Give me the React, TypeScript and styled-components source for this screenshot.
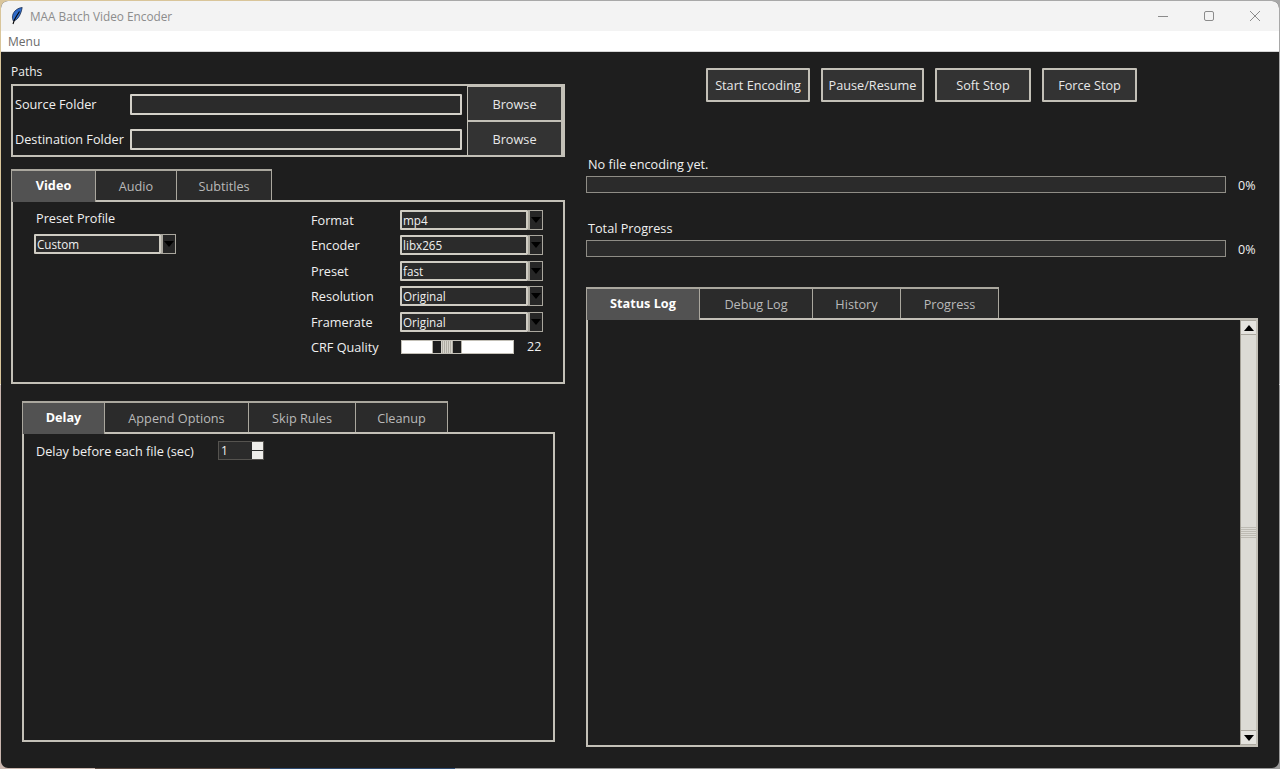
import React from 'react';
import styled, { createGlobalStyle } from 'styled-components';

const GlobalStyle = createGlobalStyle`
  html, body {
    margin: 0;
    padding: 0;
  }
  body {
    font-family: "Open Sans", "Noto Sans", "Liberation Sans", sans-serif;
    font-size: 12.7px;
  }
  * {
    box-sizing: border-box;
  }
`;

const videoOptions = [
  { label: 'Format', value: 'mp4' },
  { label: 'Encoder', value: 'libx265' },
  { label: 'Preset', value: 'fast' },
  { label: 'Resolution', value: 'Original' },
  { label: 'Framerate', value: 'Original' },
];

const actions = [
  { label: 'Start Encoding', width: 104 },
  { label: 'Pause/Resume', width: 103 },
  { label: 'Soft Stop', width: 96 },
  { label: 'Force Stop', width: 95 },
];

const Feather = () => (
  <svg width="12" height="18" viewBox="0 0 12 18">
    <path d="M11.200.5C7 .8 2.500 4 1.600 8.500 1.200 10.500 1.500 12.500 2.400 14 7 13 10 7.500 11.200.5z" fill="#2f6bc8" stroke="#10203f" strokeWidth=".7" />
    <path d="M8.500 4.500C6.500 7.500 4.500 10.500 3.400 13L2 17" stroke="#060606" strokeWidth="1.100" fill="none" />
  </svg>
);

const ArrowDown = () => (
  <svg width="10" height="6" viewBox="0 0 10 6">
    <path d="M0 0h10L5 6z" fill="#000" />
  </svg>
);

const App: React.FC = () => {
  return (
    <Desktop>
      <GlobalStyle />
      <Window>
        {/* title bar */}
        <TitleBar>
          <TitleLeft>
            <Feather />
            <TitleText>MAA Batch Video Encoder</TitleText>
          </TitleLeft>
          <WindowControls>
            <svg width="12" height="12" viewBox="0 0 12 12">
              <path d="M1 6.500h10" stroke="#8b8b8b" strokeWidth="1" />
            </svg>
            <svg width="12" height="12" viewBox="0 0 12 12">
              <rect x="1.500" y="1.500" width="9" height="9" rx="1.500" fill="none" stroke="#8b8b8b" strokeWidth="1" />
            </svg>
            <svg width="12" height="12" viewBox="0 0 12 12">
              <path d="M1 1l10 10M11 1L1 11" stroke="#8b8b8b" strokeWidth="1" />
            </svg>
          </WindowControls>
        </TitleBar>
        <MenuBar>Menu</MenuBar>

        <Content>
          <LeftColumn>
            <PathsLabel>Paths</PathsLabel>
            <PathsFrame>
              <PathRow>
                <PathLabel>Source Folder</PathLabel>
                <PathInput />
                <BrowseButton>Browse</BrowseButton>
              </PathRow>
              <PathRow>
                <PathLabel>Destination Folder</PathLabel>
                <PathInput />
                <BrowseButton>Browse</BrowseButton>
              </PathRow>
            </PathsFrame>

            <TabRow $top={12}>
              <Tab $active $width={85}>Video</Tab>
              <Tab $width={82}>Audio</Tab>
              <Tab $width={96}>Subtitles</Tab>
            </TabRow>
            <VideoPanel>
              <PresetBlock>
                <PresetLabel>Preset Profile</PresetLabel>
                <Combo value="Custom" />
              </PresetBlock>
              <OptionsGrid>
                {videoOptions.map((option) => (
                  <React.Fragment key={option.label}>
                    <OptionLabel>{option.label}</OptionLabel>
                    <Combo value={option.value} />
                  </React.Fragment>
                ))}
                <OptionLabel>CRF Quality</OptionLabel>
                <SliderRow>
                  <SliderTrough>
                    <SliderHandle>
                      <SliderGrip />
                    </SliderHandle>
                  </SliderTrough>
                  <SliderValue>22</SliderValue>
                </SliderRow>
              </OptionsGrid>
            </VideoPanel>

            <NestedTabs>
              <TabRow $top={0}>
                <Tab $active $width={83}>Delay</Tab>
                <Tab $width={145}>Append Options</Tab>
                <Tab $width={108}>Skip Rules</Tab>
                <Tab $width={93}>Cleanup</Tab>
              </TabRow>
              <DelayPanel>
                <DelayLabel>Delay before each file (sec)</DelayLabel>
                <Spinbox>
                  <SpinValue>1</SpinValue>
                  <SpinButtons>
                    <SpinButton />
                    <SpinButton />
                  </SpinButtons>
                </Spinbox>
              </DelayPanel>
            </NestedTabs>
          </LeftColumn>

          <RightColumn>
            <ActionRow>
              {actions.map((action) => (
                <ActionButton key={action.label} $width={action.width}>
                  {action.label}
                </ActionButton>
              ))}
            </ActionRow>

            <ProgressLabel $top={53}>No file encoding yet.</ProgressLabel>
            <ProgressRow>
              <ProgressBar />
              <ProgressValue>0%</ProgressValue>
            </ProgressRow>
            <ProgressLabel $top={26}>Total Progress</ProgressLabel>
            <ProgressRow>
              <ProgressBar />
              <ProgressValue>0%</ProgressValue>
            </ProgressRow>

            <TabRow $top={30}>
              <Tab $active $width={114}>Status Log</Tab>
              <Tab $width={114}>Debug Log</Tab>
              <Tab $width={89}>History</Tab>
              <Tab $width={99}>Progress</Tab>
            </TabRow>
            <LogPanel>
              <LogArea />
              <Scrollbar>
                <ScrollArrow>
                  <svg width="10" height="6" viewBox="0 0 10 6">
                    <path d="M5 0l5 6H0z" fill="#000" />
                  </svg>
                </ScrollArrow>
                <ScrollThumb>
                  <ThumbGrip />
                </ScrollThumb>
                <ScrollArrow>
                  <ArrowDown />
                </ScrollArrow>
              </Scrollbar>
            </LogPanel>
          </RightColumn>
        </Content>
      </Window>
    </Desktop>
  );
};

const Combo: React.FC<{ value: string }> = ({ value }) => (
  <ComboBox>
    <ComboValue>{value}</ComboValue>
    <ComboArrow>
      <ArrowDown />
    </ComboArrow>
  </ComboBox>
);

export default App;

// wallpaper peeks out along the window edge
const Desktop = styled.div`
  width: 1280px;
  height: 769px;
  padding: 1px;
  display: flex;
  background:
    linear-gradient(90deg, #d9c59a 0 270px, #a8a8a8 270px) top / 100% 50% no-repeat,
    linear-gradient(90deg, #c9b6ae 0 95px, #5a4a42 95px 270px, #2e4a70 270px 455px, #9a9a9a 455px) bottom / 100% 50% no-repeat;
`;
const Window = styled.div`
  flex: 1;
  display: flex;
  flex-direction: column;
  overflow: hidden;
  background: #1e1e1e;
  border-radius: 7px;
  color: #f0f0f0;
`;

// title bar
const TitleBar = styled.div`
  height: 30px;
  flex: none;
  display: flex;
  align-items: center;
  justify-content: space-between;
  padding: 0 18px 0 10px;
  background: #f3f3f3;
`;
const TitleLeft = styled.div`
  display: flex;
  align-items: center;
  gap: 7px;
`;
const TitleText = styled.span`
  font-size: 11.800px;
  color: #8c8c8c;
`;
const WindowControls = styled.div`
  display: flex;
  align-items: center;
  gap: 34px;
`;
const MenuBar = styled.div`
  height: 21px;
  flex: none;
  padding: 0 7px;
  font-size: 12px;
  line-height: 21px;
  color: #6a6a6a;
  background: #fff;
  border-bottom: 1px solid #d6d6d6;
`;

const Content = styled.div`
  flex: 1;
  display: flex;
  gap: 21px;
  padding-left: 10px;
`;
const LeftColumn = styled.div`
  width: 554px;
  flex: none;
`;
const RightColumn = styled.div`
  width: 672px;
  flex: none;
`;

// paths
const PathsLabel = styled.div`
  margin-top: 11px;
  line-height: 18px;
  font-size: 12px;
`;
const PathsFrame = styled.div`
  margin-top: 3px;
  height: 73px;
  border: 2px solid #c3c0b7;
  border-right-width: 1px;
  padding-left: 2px;
`;
const PathRow = styled.div`
  height: 35px;
  display: grid;
  grid-template-columns: 110px 332px 97px;
  column-gap: 5px;
  align-items: center;
`;
const PathLabel = styled.span`
  white-space: nowrap;
`;
const PathInput = styled.div`
  height: 21px;
  background: #2b2b2b;
  border: 2px solid #d4d1c9;
  border-radius: 1px;
`;
const BrowseButton = styled.button`
  height: 36px;
  padding: 0;
  font: inherit;
  color: #e8e8e8;
  background: #333;
  border: 1px solid #c3c0b7;
  border-right-width: 3px;
  border-bottom-width: 2px;
`;

// notebook tabs
const TabRow = styled.div<{ $top: number }>`
  height: 31px;
  display: flex;
  align-items: flex-start;
  margin-top: ${({ $top }) => $top}px;
`;
const Tab = styled.div<{ $active?: boolean; $width: number }>`
  position: relative;
  z-index: ${({ $active }) => ($active ? 1 : 0)};
  width: ${({ $width }) => $width}px;
  height: ${({ $active }) => ($active ? 33 : 31)}px;
  margin-right: -1px;
  padding-top: ${({ $active }) => ($active ? 1 : 0)}px;
  display: flex;
  align-items: ${({ $active }) => ($active ? 'flex-start' : 'center')};
  justify-content: center;
  line-height: 26px;
  color: ${({ $active }) => ($active ? '#fff' : '#b9b9b9')};
  font-weight: ${({ $active }) => ($active ? 700 : 400)};
  background: ${({ $active }) => ($active ? '#525252' : '#2b2b2b')};
  border: 1px solid #aaa79e;
  border-top-width: 2px;
  border-bottom: none;
`;
const VideoPanel = styled.div`
  height: 184px;
  display: flex;
  gap: 135px;
  padding: 8px 0 0 21px;
  border: 2px solid #c3c0b7;
`;
const PresetBlock = styled.div`
  width: 142px;
  flex: none;
`;
const PresetLabel = styled.div`
  margin: 0 0 7px 2px;
  line-height: 17px;
`;
const OptionsGrid = styled.div`
  display: grid;
  grid-template-columns: 89px 143px;
  grid-auto-rows: 20px;
  row-gap: 5.400px;
  align-items: center;
`;
const OptionLabel = styled.span`
  white-space: nowrap;
`;
const ComboBox = styled.div`
  height: 20px;
  display: flex;
  background: #1e1e1e;
`;
const ComboValue = styled.div`
  flex: 1;
  padding-left: 1px;
  font-size: 11.700px;
  line-height: 16px;
  background: #2b2b2b;
  border: 2px solid #cfccc3;
  border-radius: 1px;
`;
const ComboArrow = styled.div`
  width: 15px;
  flex: none;
  display: flex;
  align-items: center;
  justify-content: center;
  background: #262626;
  border: 1px solid #aaa79e;
  border-left-width: 2px;
`;
const SliderRow = styled.div`
  display: flex;
  align-items: center;
  padding-left: 1px;
`;
const SliderTrough = styled.div`
  width: 113px;
  height: 14px;
  padding-left: 30px;
  background: #fff;
  border: 1px solid #c3c0b7;
`;
const SliderHandle = styled.div`
  width: 30px;
  height: 12px;
  display: flex;
  justify-content: center;
  background: #1e1e1e;
  border-left: 1px solid #b5b2a8;
  border-right: 1px solid #b5b2a8;
`;
const SliderGrip = styled.div`
  width: 12px;
  height: 12px;
  background: repeating-linear-gradient(90deg, #d6d4cc 0 1px, #b0ada4 1px 2px);
`;
const SliderValue = styled.span`
  margin-left: 13px;
  font-size: 12.500px;
`;

// nested tabs
const NestedTabs = styled.div`
  margin: 17px 0 0 11px;
  width: 533px;
`;
const DelayPanel = styled.div`
  height: 310px;
  display: flex;
  align-items: flex-start;
  padding: 7px 0 0 12px;
  border: 2px solid #c3c0b7;
`;
const DelayLabel = styled.span`
  width: 182px;
  line-height: 20px;
  white-space: nowrap;
`;
const Spinbox = styled.div`
  width: 46px;
  height: 19px;
  display: flex;
  background: #2b2b2b;
  border: 1px solid #55534f;
`;
const SpinValue = styled.div`
  flex: 1;
  padding-left: 2px;
  font-size: 12px;
  line-height: 17px;
`;
const SpinButtons = styled.div`
  width: 11px;
  display: flex;
  flex-direction: column;
  gap: 1px;
`;
const SpinButton = styled.div`
  flex: 1;
  background: #eeedea;
`;

// encode actions
const ActionRow = styled.div`
  margin-top: 16px;
  display: flex;
  gap: 11px;
  padding-left: 120px;
`;
const ActionButton = styled.button<{ $width: number }>`
  width: ${({ $width }) => $width}px;
  height: 34px;
  padding: 0;
  font: inherit;
  color: #e8e8e8;
  background: #333;
  border: 2px solid #c3c0b7;
  border-radius: 1px;
`;

// progress
const ProgressLabel = styled.div<{ $top: number }>`
  margin: ${({ $top }) => $top}px 0 3px 2px;
  line-height: 18px;
`;
const ProgressRow = styled.div`
  height: 17px;
  display: flex;
  align-items: flex-start;
`;
const ProgressBar = styled.div`
  width: 640px;
  height: 17px;
  background: #2b2b2b;
  border: 1px solid #8f8d86;
`;
const ProgressValue = styled.span`
  margin-left: 12px;
  font-size: 12.500px;
  line-height: 20px;
`;

// log
const LogPanel = styled.div`
  height: 429px;
  display: flex;
  border: 2px solid #c3c0b7;
`;
const LogArea = styled.div`
  flex: 1;
  background: #1e1e1e;
`;
const Scrollbar = styled.div`
  width: 16px;
  flex: none;
  display: flex;
  flex-direction: column;
  background: #dcdbd5;
  border-left: 1px solid #a3a096;
`;
const ScrollArrow = styled.div`
  height: 15px;
  flex: none;
  display: flex;
  align-items: center;
  justify-content: center;
  background: #e4e3de;
  border-bottom: 1px solid #aaa79e;
  border-top: 1px solid #aaa79e;
`;
const ScrollThumb = styled.div`
  flex: 1;
  display: flex;
  align-items: center;
  justify-content: center;
`;
const ThumbGrip = styled.div`
  width: 100%;
  height: 11px;
  background: repeating-linear-gradient(180deg, #bdbbb3 0 1px, #dcdbd5 1px 2px);
`;
